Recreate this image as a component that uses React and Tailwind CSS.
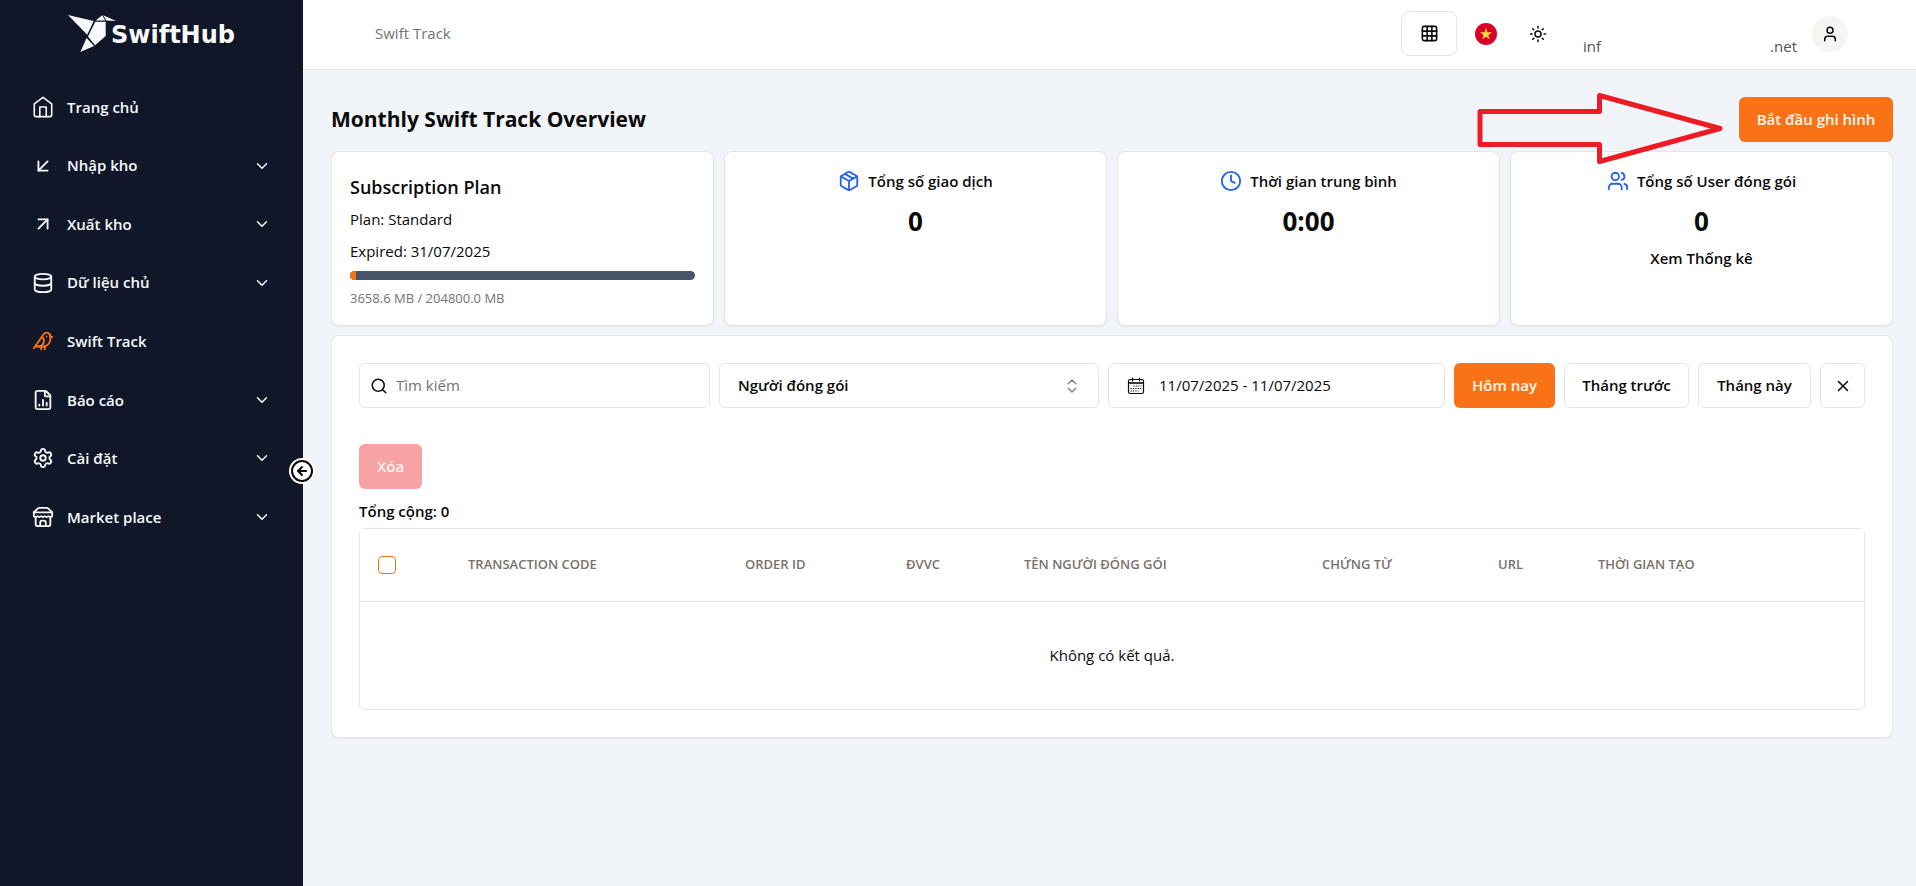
import React, { useState } from 'react';
import {
  ArrowDownLeft,
  ArrowUpRight,
  Bird,
  ChevronDown,
  ChevronsUpDown,
  CircleArrowLeft,
  Clock,
  Database,
  FileChartColumn,
  Grid3x3,
  Package,
  Search,
  Settings,
  Sun,
  User,
  Users,
  X,
} from 'lucide-react';

function HomeIcon({ className }) {
  return (
    <svg className={className} viewBox="0 0 24 24" fill="none" stroke="currentColor" strokeWidth="1.75" strokeLinecap="round" strokeLinejoin="round">
      <path d="m2.500 8.500 9.500-7 9.500 7v12a2 2 0 0 1-2 2h-15a2 2 0 0 1-2-2z" />
      <path d="M8.500 22.500V12h7v10.500" />
    </svg>
  );
}

function StoreIcon({ className }) {
  return (
    <svg className={className} viewBox="0 0 24 24" fill="none" stroke="currentColor" strokeWidth="2" strokeLinecap="round" strokeLinejoin="round">
      <path d="m2 7 4.41-4.41A2 2 0 0 1 7.83 2h8.34a2 2 0 0 1 1.42.59L22 7" />
      <path d="M4 12v8a2 2 0 0 0 2 2h12a2 2 0 0 0 2-2v-8" />
      <path d="M15 22v-4a2 2 0 0 0-2-2h-2a2 2 0 0 0-2 2v4" />
      <path d="M2 7h20" />
      <path d="M22 7v3a2 2 0 0 1-2 2 2.7 2.7 0 0 1-1.59-.63.7.7 0 0 0-.82 0A2.7 2.7 0 0 1 16 12a2.7 2.7 0 0 1-1.59-.63.7.7 0 0 0-.82 0A2.7 2.7 0 0 1 12 12a2.7 2.7 0 0 1-1.59-.63.7.7 0 0 0-.82 0A2.7 2.7 0 0 1 8 12a2.7 2.7 0 0 1-1.59-.63.7.7 0 0 0-.82 0A2.7 2.7 0 0 1 4 12a2 2 0 0 1-2-2V7" />
    </svg>
  );
}

function CalendarIcon({ className }) {
  return (
    <svg className={className} viewBox="0 0 18 18" fill="none" stroke="currentColor">
      <rect x="1.5" y="2.5" width="15" height="14" rx="1.5" strokeWidth="1.2" />
      <path d="M1.5 6h15" strokeWidth="1.6" />
      <path d="M5.5 1v3M12.5 1v3" strokeWidth="1.2" strokeLinecap="round" />
      <path d="M6.5 9h8M3.5 11.5h11M3.5 14h8" strokeWidth="1.2" strokeDasharray="1.2 1.2" />
    </svg>
  );
}

function Logo() {
  return (
    <a href="#" className="flex h-[69px] items-start justify-center pt-[14px] text-slate-50">
      <svg className="h-[39px] w-[49px]" viewBox="0 0 49 39" fill="currentColor" aria-hidden="true">
        <path d="M0 1 25.7 7 19.2 20.800Z" />
        <path d="M27.3 7.7H37.7V22L27 31.300 20 22.500Z" />
        <path d="M27.600 6.500 34.200 1.300 37.200 6.500Z" />
        <path d="M35.2 1.300 48 7 38.3 6.500Z" />
        <path d="M18.600 24 26 32 12.300 38Z" />
      </svg>
      <span className="-ml-[6px] pt-[6px] font-['DejaVu_Sans',sans-serif] text-2xl leading-[30px] font-bold">SwiftHub</span>
    </a>
  );
}

const NAV_ITEMS = [
  { label: 'Trang chủ', icon: HomeIcon },
  { label: 'Nhập kho', icon: ArrowDownLeft, expandable: true },
  { label: 'Xuất kho', icon: ArrowUpRight, expandable: true },
  { label: 'Dữ liệu chủ', icon: Database, expandable: true },
  { label: 'Swift Track', icon: Bird, active: true },
  { label: 'Báo cáo', icon: FileChartColumn, expandable: true },
  { label: 'Cài đặt', icon: Settings, expandable: true },
  { label: 'Market place', icon: StoreIcon, expandable: true },
];

function Sidebar() {
  return (
    <aside className="relative w-[303px] shrink-0 bg-[#101728]">
      <Logo />
      <nav className="mt-[11px] flex h-[464px] flex-col justify-between px-8">
        {NAV_ITEMS.map(({ label, icon: Icon, expandable, active }) => {
          const content = (
            <>
              <Icon className={active ? 'size-[22px] text-[#f97316]' : 'size-[22px]'} />
              <span className="flex-1 text-left">{label}</span>
              {expandable && <ChevronDown className="size-[18px]" />}
            </>
          );
          const itemClass = 'flex h-[54px] w-full items-center gap-[13px] text-[15px] font-semibold text-slate-50';
          return expandable ? (
            <button key={label} type="button" className={itemClass}>{content}</button>
          ) : (
            <a key={label} href="#" className={itemClass}>{content}</a>
          );
        })}
      </nav>
      <button
        type="button"
        aria-label="Thu gọn menu"
        className="absolute top-[458px] -right-3 flex size-[26px] items-center justify-center rounded-full bg-white text-neutral-950"
      >
        <CircleArrowLeft className="size-6 shrink-0" />
      </button>
    </aside>
  );
}

function Header() {
  return (
    <header className="flex h-[70px] items-center border-b border-[#e5e5e5] bg-white pr-[68px] pb-[2px] pl-[72px]">
      <span className="flex-1 text-[15px] text-neutral-500">Swift Track</span>
      <button type="button" aria-label="Ứng dụng" className="flex h-[45px] w-14 items-center justify-center rounded-lg border border-[#e5e5e5]">
        <Grid3x3 className="size-[19px]" />
      </button>
      <button type="button" aria-label="Tiếng Việt" className="ml-[18px]">
        <svg className="size-[22px]" viewBox="0 0 22 22">
          <circle cx="11" cy="11" r="11" fill="#d80027" />
          <path fill="#ffda44" d="m11 4.8 1.45 4.4h4.65l-3.75 2.75 1.42 4.4L11 13.65l-3.77 2.7 1.42-4.4L4.9 9.2h4.65z" />
        </svg>
      </button>
      <button type="button" aria-label="Giao diện" className="ml-8">
        <Sun className="size-[18px]" />
      </button>
      <div className="ml-9 flex w-[214px] justify-between pt-[26px] text-[15px] text-neutral-600">
        <span>inf</span>
        <span>.net</span>
      </div>
      <button type="button" aria-label="Tài khoản" className="ml-[15px] flex size-9 items-center justify-center rounded-full bg-stone-100">
        <User className="size-[18px]" />
      </button>
    </header>
  );
}

const CARD = 'rounded-lg border border-[#e5e5e5] bg-white shadow-xs';

function StatCard({ icon: Icon, label, value, children }) {
  return (
    <div className={`${CARD} flex flex-col items-center pt-[18px] text-[15px] font-semibold`}>
      <div className="flex items-center gap-2">
        <Icon className="size-[22px] text-[#2563eb]" />
        <span>{label}</span>
      </div>
      <div className="mt-[10px] text-[26px] leading-9 font-bold">{value}</div>
      {children}
    </div>
  );
}

function SubscriptionCard() {
  const used = 3658.6;
  const total = 204800;
  return (
    <div className={`${CARD} flex h-[175px] flex-col px-[18px] pt-[22px]`}>
      <h2 className="text-lg leading-[26px] font-semibold">Subscription Plan</h2>
      <p className="mt-[7px] text-[15px] leading-6">Plan: Standard</p>
      <p className="mt-2 text-[15px] leading-6">Expired: 31/07/2025</p>
      <div className="mt-2 h-[9px] overflow-hidden rounded-full bg-[#475569]">
        <div className="h-full bg-[#f97316]" style={{ width: `${(used / total) * 100}%` }} />
      </div>
      <p className="mt-2 text-[13px] leading-5 text-neutral-500">{used.toFixed(1)} MB / {total.toFixed(1)} MB</p>
    </div>
  );
}

const OUTLINE_BUTTON = 'h-[45px] rounded-md border border-[#e5e5e5] bg-white text-[15px] font-semibold';

function Filters() {
  const [query, setQuery] = useState('');
  return (
    <div className="flex gap-[9px]">
      <label className="flex h-[45px] w-[351px] items-center gap-2 rounded-md border border-[#e5e5e5] px-[10px]">
        <Search className="size-[18px] shrink-0" />
        <input
          type="text"
          aria-label="Tìm kiếm"
          placeholder="Tìm kiếm"
          value={query}
          onChange={(e) => setQuery(e.target.value)}
          className="w-full text-[15px] placeholder:text-neutral-500 focus:outline-none"
        />
      </label>
      <div className="relative w-[380px]">
        <select aria-label="Người đóng gói" className="h-[45px] w-full appearance-none rounded-md border border-[#e5e5e5] bg-white px-[18px] text-[15px] font-semibold">
          <option>Người đóng gói</option>
        </select>
        <ChevronsUpDown className="pointer-events-none absolute top-[14px] right-[18px] size-[18px] opacity-50" />
      </div>
      <button type="button" className="flex h-[45px] flex-1 items-center gap-[14px] rounded-md border border-[#e5e5e5] px-[18px] text-[15px]">
        <CalendarIcon className="size-[18px]" />
        11/07/2025 - 11/07/2025
      </button>
      <button type="button" className="h-[45px] w-[101px] rounded-md bg-[#f97316] text-[15px] font-semibold text-orange-50">Hôm nay</button>
      <button type="button" className={`${OUTLINE_BUTTON} w-[125px]`}>Tháng trước</button>
      <button type="button" className={`${OUTLINE_BUTTON} w-[113px]`}>Tháng này</button>
      <button type="button" aria-label="Xóa bộ lọc" className="flex size-[45px] items-center justify-center rounded-md border border-[#e5e5e5]">
        <X className="size-[18px]" />
      </button>
    </div>
  );
}

const COLUMNS = [
  { label: 'TRANSACTION CODE', width: 'w-[277px]' },
  { label: 'ORDER ID', width: 'w-[161px]' },
  { label: 'ĐVVC', width: 'w-[118px]' },
  { label: 'TÊN NGƯỜI ĐÓNG GÓI', width: 'w-[298px]' },
  { label: 'CHỨNG TỪ', width: 'w-[176px]' },
  { label: 'URL', width: 'w-[100px]' },
  { label: 'THỜI GIAN TẠO', width: 'w-auto' },
];

function TransactionTable() {
  return (
    <div className="mt-[5px] rounded-md border border-[#e5e5e5]">
      <table className="w-full table-fixed text-[15px]">
        <thead>
          <tr className="h-[72px] border-b border-[#e5e5e5] bg-white text-left text-[13px] text-stone-500">
            <th className="w-[90px] px-[18px]">
              <input type="checkbox" aria-label="Chọn tất cả" className="block size-[18px] appearance-none rounded border border-[#f97316]" />
            </th>
            {COLUMNS.map(({ label, width }) => (
              <th key={label} className={`${width} px-[18px] font-semibold whitespace-nowrap`}>{label}</th>
            ))}
          </tr>
        </thead>
        <tbody>
          <tr className="h-[108px]">
            <td colSpan={8} className="text-center">Không có kết quả.</td>
          </tr>
        </tbody>
      </table>
    </div>
  );
}

// Hand-drawn callout that points at the record button
function CalloutArrow() {
  return (
    <svg className="pointer-events-none absolute -top-1 right-[168px] h-[72px] w-[248px]" viewBox="0 0 248 72" fill="none" aria-hidden="true">
      <path d="M3 18.500H122.500V2.500L243 35.500 122.500 68.500V51.500H3Z" stroke="#ed1c24" strokeWidth="5" strokeLinejoin="round" />
    </svg>
  );
}

export default function App() {
  return (
    <div className="flex min-h-screen bg-[#f1f4f9] font-['Open_Sans','Noto_Sans',sans-serif] text-neutral-950">
      <Sidebar />
      <div className="min-w-0 flex-1">
        <Header />
        <main className="pt-[27px] pr-[23px] pl-7">
          <div className="relative flex items-center justify-between">
            <h1 className="text-[21px] font-bold">Monthly Swift Track Overview</h1>
            <button type="button" className="h-[45px] w-[154px] rounded-md bg-[#f97316] text-[15px] font-semibold text-orange-50">
              Bắt đầu ghi hình
            </button>
            <CalloutArrow />
          </div>
          <section className="mt-[9px] grid grid-cols-4 gap-[10px]">
            <SubscriptionCard />
            <StatCard icon={Package} label="Tổng số giao dịch" value="0" />
            <StatCard icon={Clock} label="Thời gian trung bình" value="0:00" />
            <StatCard icon={Users} label="Tổng số User đóng gói" value="0">
              <a href="#" className="mt-2">Xem Thống kê</a>
            </StatCard>
          </section>
          <section className={`${CARD} mt-[9px] p-[27px]`}>
            <Filters />
            <button type="button" disabled className="mt-9 block h-[45px] w-[63px] rounded-md bg-[#f8a3a3] text-[15px] font-semibold text-red-50">
              Xóa
            </button>
            <p className="mt-[10px] text-[15px] leading-6 font-semibold">Tổng cộng: 0</p>
            <TransactionTable />
          </section>
        </main>
      </div>
    </div>
  );
}
